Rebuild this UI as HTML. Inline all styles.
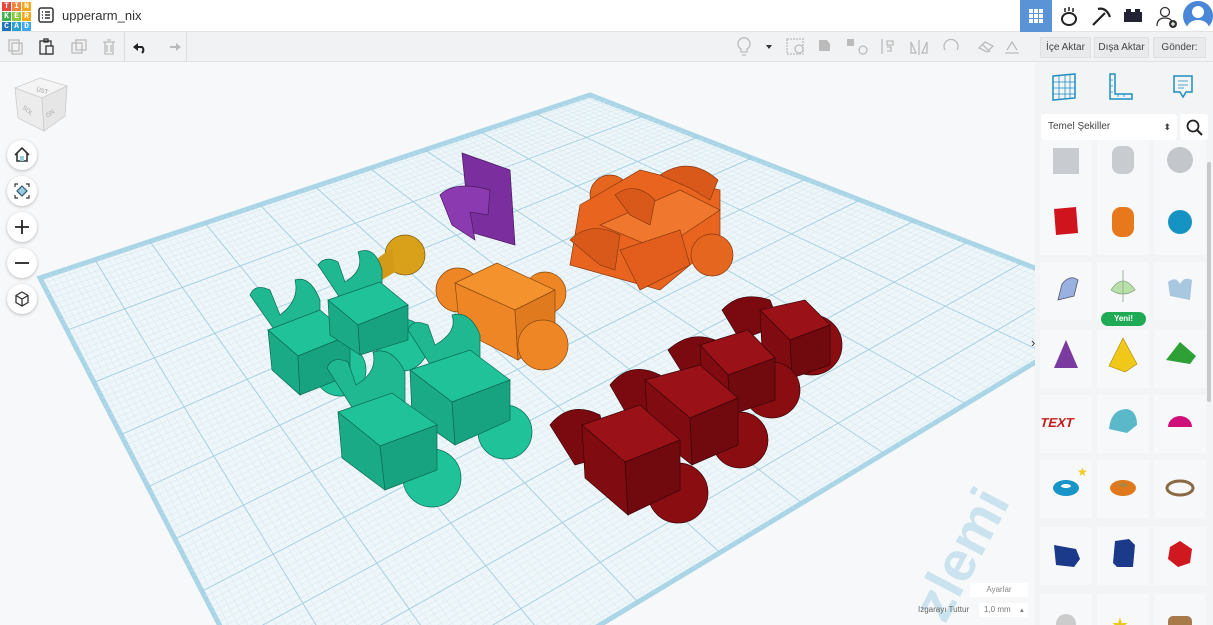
<!DOCTYPE html>
<html><head><meta charset="utf-8"><style>
*{margin:0;padding:0;box-sizing:border-box}
html,body{width:1213px;height:625px;overflow:hidden}
body{font-family:"Liberation Sans",sans-serif;background:#f7f8f9;position:relative}
#top{position:absolute;left:0;top:0;width:1213px;height:32px;background:#fff;border-bottom:1px solid #e3e3e3}
#tb{position:absolute;left:0;top:32px;width:1213px;height:30px;background:#f1f2f4;border-bottom:1px solid #e2e2e2}
.logo{position:absolute;left:2px;top:2px;width:28px;height:28px;display:grid;grid-template-columns:repeat(3,9px);gap:1px}
.logo span{font:bold 8px "Liberation Mono",monospace;color:#fff;text-align:center;line-height:9px}
.title{position:absolute;left:62px;top:8px;font-size:13px;color:#333}
.btn{position:absolute;top:37px;height:21px;background:#e9eaec;border:1px solid #e0e0e0;font-size:10px;color:#444;text-align:center;line-height:19px}
#panel{position:absolute;left:1035px;top:62px;width:178px;height:563px;background:#f3f4f6;overflow:hidden}
.tile{position:absolute;width:52px;height:58px;background:#f7f8fa}
.nav{position:absolute;left:7px;width:30px;height:30px;border-radius:50%;background:#fff;box-shadow:0 1px 3px rgba(0,0,0,.25)}
</style></head><body>
<svg id="scene" width="1035" height="625" style="position:absolute;left:0;top:0">
<g id="grid"></g>
<text x="0" y="0" transform="translate(945,625) rotate(-62)" font-size="56" font-weight="bold" fill="#a8d3e6" opacity=".55" font-family="Liberation Sans">zlemi</text>
<polygon points="462,153 510,170 515,245 470,232" fill="#7b2e9e" stroke="#4a1a60" stroke-width=".7"/>
<path d="M440,195 Q455,180 490,190 L488,215 L470,212 L475,240 L452,225 Z" fill="#8b3ab0" stroke="#4a1a60" stroke-width=".7"/>
<circle cx="405" cy="255" r="20" fill="#d9a01a" stroke="#7a5a10" stroke-width=".7"/>
<polygon points="378,258 392,248 395,272 382,280" fill="#d29a18"/>
<circle cx="610" cy="195" r="20" fill="#e4661f" stroke="#8a3a10" stroke-width=".7"/>
<polygon points="580,205 640,170 720,190 720,240 660,290 570,265" fill="#e8641f" stroke="#8a3a10" stroke-width=".7"/>
<polygon points="600,225 680,190 720,210 660,250 " fill="#f0782e" stroke="#8a3a10" stroke-width=".7"/>
<path d="M570,240 Q590,220 620,235 L615,270 L600,265 Z" fill="#d8591a" stroke="#8a3a10" stroke-width=".7"/>
<path d="M660,175 Q690,155 718,180 L710,200 L690,188 Z" fill="#d8591a" stroke="#8a3a10" stroke-width=".7"/>
<path d="M615,195 Q635,180 655,200 L650,225 L630,215 Z" fill="#d8591a" stroke="#8a3a10" stroke-width=".7"/>
<polygon points="620,250 680,230 690,265 640,290" fill="#e35e1c" stroke="#8a3a10" stroke-width=".7"/>
<circle cx="712" cy="255" r="21" fill="#e4661f" stroke="#8a3a10" stroke-width=".7"/>
<circle cx="458" cy="290" r="22" fill="#ee8626" stroke="#8a4a10" stroke-width=".7"/>
<circle cx="545" cy="293" r="21" fill="#ee8626" stroke="#8a4a10" stroke-width=".7"/>
<polygon points="455,283 497,263 555,290 515,310" fill="#f4922e" stroke="#8a4a10" stroke-width=".7"/>
<polygon points="455,283 515,310 518,360 460,330" fill="#ee8626" stroke="#8a4a10" stroke-width=".7"/>
<polygon points="515,310 555,290 555,335 518,360" fill="#e07a1e" stroke="#8a4a10" stroke-width=".7"/>
<circle cx="543" cy="345" r="25" fill="#ee8626" stroke="#8a4a10" stroke-width=".7"/>
<g fill="#20c29a" stroke="#0b6a52" stroke-width=".7">
<circle cx="340" cy="370" r="26"/>
<path d="M250,295 Q255,283 270,290 L280,315 Q300,300 295,280 Q310,275 320,300 L320,330 L285,345 Z" fill="#1fb891"/>
<polygon points="268,330 320,310 350,335 298,356"/><polygon points="268,330 298,356 300,395 272,370" fill="#1aaa86"/><polygon points="298,356 350,335 350,375 300,395" fill="#18a380"/>
<circle cx="402" cy="345" r="26"/>
<path d="M318,265 Q325,255 338,262 L345,282 Q365,270 358,252 Q375,245 382,270 L382,300 L348,310 Z" fill="#1fb891"/>
<polygon points="328,300 380,282 408,305 358,325"/><polygon points="328,300 358,325 360,355 330,335" fill="#1aaa86"/><polygon points="358,325 408,305 408,340 360,355" fill="#18a380"/>
<circle cx="505" cy="432" r="27"/>
<path d="M408,330 Q412,318 428,325 L435,345 Q458,332 452,315 Q470,310 480,335 L480,370 L440,380 Z" fill="#1fb891"/>
<polygon points="410,370 470,350 510,380 452,402"/><polygon points="410,370 452,402 455,445 412,415" fill="#1aaa86"/><polygon points="452,402 510,380 510,420 455,445" fill="#18a380"/>
<circle cx="432" cy="478" r="29"/>
<path d="M327,368 Q332,355 348,362 L356,385 Q378,372 373,352 Q392,346 405,372 L405,410 L360,420 Z" fill="#1fb891"/>
<polygon points="338,412 392,393 437,425 380,446"/><polygon points="338,412 380,446 385,490 342,458" fill="#1aaa86"/><polygon points="380,446 437,425 437,470 385,490" fill="#18a380"/>
</g>
<g fill="#8a0d12" stroke="#3a0508" stroke-width=".7">
<circle cx="812" cy="345" r="30"/>
<path d="M722,310 Q740,290 770,300 L780,325 L740,340 Z" fill="#7a0a10"/>
<polygon points="760,310 805,300 830,325 790,340" fill="#9a1218"/><polygon points="790,340 830,325 830,365 792,378" fill="#700a0e"/><polygon points="760,310 790,340 792,378 762,350" fill="#800b10"/>
<circle cx="772" cy="390" r="28"/>
<path d="M668,350 Q690,330 715,340 L725,370 L690,385 Z" fill="#7a0a10"/>
<polygon points="700,345 748,330 775,358 728,375" fill="#9a1218"/><polygon points="728,375 775,358 775,400 730,415" fill="#700a0e"/><polygon points="700,345 728,375 730,415 702,390" fill="#800b10"/>
<circle cx="740" cy="440" r="28"/>
<path d="M610,385 Q630,360 660,375 L670,405 L630,420 Z" fill="#7a0a10"/>
<polygon points="645,380 700,365 738,398 690,418" fill="#9a1218"/><polygon points="690,418 738,398 738,445 692,465" fill="#700a0e"/><polygon points="645,380 690,418 692,465 648,430" fill="#800b10"/>
<circle cx="678" cy="493" r="30"/>
<path d="M550,425 Q570,400 600,415 L610,455 L575,465 Z" fill="#7a0a10"/>
<polygon points="582,425 640,405 680,440 625,462" fill="#9a1218"/><polygon points="625,462 680,440 680,490 628,515" fill="#700a0e"/><polygon points="582,425 625,462 628,515 585,478" fill="#800b10"/>
</g>
</svg>
<script>
(function(){
var T=[590,95],L=[40,278],R=[1130,305],B=[310,800];
function p(u,v){return [T[0]*(1-u)*(1-v)+R[0]*u*(1-v)+L[0]*(1-u)*v+B[0]*u*v, T[1]*(1-u)*(1-v)+R[1]*u*(1-v)+L[1]*(1-u)*v+B[1]*u*v];}
var s='<polygon points="'+T+' '+R+' '+B+' '+L+'" fill="#eef6f9" stroke="#a9d5e6" stroke-width="5"/>';
var N=100;
for(var i=1;i<N;i++){var t=i/N,c=(i%10==0)?'#a6d0e2':'#d2e7ef',w=(i%10==0)?1:.5;
var a=p(t,0),b=p(t,1);s+='<line x1="'+a[0]+'" y1="'+a[1]+'" x2="'+b[0]+'" y2="'+b[1]+'" stroke="'+c+'" stroke-width="'+w+'"/>';
a=p(0,t);b=p(1,t);s+='<line x1="'+a[0]+'" y1="'+a[1]+'" x2="'+b[0]+'" y2="'+b[1]+'" stroke="'+c+'" stroke-width="'+w+'"/>';}
document.getElementById('grid').innerHTML=s;})();
</script>
<div id="top">
<div class="logo"><span style="background:#e8453c">T</span><span style="background:#f0843a">I</span><span style="background:#f4a81d">N</span><span style="background:#3fb34f">K</span><span style="background:#8cc63e">E</span><span style="background:#f4a81d">R</span><span style="background:#1c75bc">C</span><span style="background:#2a9fd6">A</span><span style="background:#3fa9f5">D</span></div>
<svg style="position:absolute;left:38px;top:7px" width="16" height="16"><rect x="1" y="1" width="14" height="14" rx="2" fill="none" stroke="#333" stroke-width="1.5"/><path d="M4 5h1M7 5h5M4 8h1M7 8h5M4 11h1M7 11h5" stroke="#333" stroke-width="1.5"/></svg>
<div class="title">upperarm_nix</div>
<div style="position:absolute;left:1020px;top:0;width:32px;height:32px;background:#5a94d6"><svg width="32" height="32"><g fill="#fff"><rect x="9" y="9" width="4" height="4"/><rect x="14" y="9" width="4" height="4"/><rect x="19" y="9" width="4" height="4"/><rect x="9" y="14" width="4" height="4"/><rect x="14" y="14" width="4" height="4"/><rect x="19" y="14" width="4" height="4"/><rect x="9" y="19" width="4" height="4"/><rect x="14" y="19" width="4" height="4"/><rect x="19" y="19" width="4" height="4"/></g></svg></div>
<svg style="position:absolute;left:1058px;top:5px" width="22" height="22"><ellipse cx="11" cy="14" rx="7" ry="6" fill="none" stroke="#222" stroke-width="2"/><path d="M7 3v4M11 2v4M15 3v4" stroke="#222" stroke-width="1.5"/></svg>
<svg style="position:absolute;left:1090px;top:5px" width="22" height="22"><path d="M3 20L15 8M8 4Q16 2 20 12" stroke="#222" stroke-width="2.2" fill="none"/></svg>
<svg style="position:absolute;left:1123px;top:8px" width="20" height="16"><rect x="1" y="4" width="18" height="10" fill="#223"/><rect x="3" y="1" width="5" height="4" fill="#223"/><rect x="12" y="1" width="5" height="4" fill="#223"/></svg>
<svg style="position:absolute;left:1155px;top:5px" width="24" height="24"><circle cx="10" cy="7" r="4.5" fill="none" stroke="#333" stroke-width="1.3"/><path d="M2 21Q2 13 10 13Q16 13 17 17" fill="none" stroke="#333" stroke-width="1.3"/><circle cx="18" cy="19" r="4" fill="#333"/><path d="M16 19h4M18 17v4" stroke="#fff" stroke-width="1.2"/></svg>
<div style="position:absolute;left:1183px;top:1px;width:30px;height:30px;border-radius:50%;background:#4a86d8;overflow:hidden"><div style="position:absolute;left:9px;top:5px;width:12px;height:12px;border-radius:50%;background:#fff"></div><div style="position:absolute;left:4px;top:19px;width:22px;height:16px;border-radius:50%;background:#fff"></div></div>
</div>
<div id="tb">
<svg style="position:absolute;left:6px;top:5px" width="180" height="20"><g fill="none" stroke="#bbb" stroke-width="1.3"><rect x="3" y="3" width="10" height="11"/><rect x="6" y="6" width="10" height="11"/></g><g fill="none" stroke="#333" stroke-width="1.3"><rect x="34" y="4" width="11" height="13"/><rect x="38" y="2" width="4" height="3"/><rect x="40" y="9" width="7" height="8" fill="#f1f2f4"/></g><g fill="none" stroke="#bbb" stroke-width="1.3"><rect x="66" y="6" width="10" height="10"/><rect x="70" y="3" width="10" height="10"/><path d="M97 5h12M99 5v12h8V5M101 8v7M105 8v7M101 3h4"/></g><path d="M128 10h8a4 4 0 0 1 0 6" fill="none" stroke="#222" stroke-width="2"/><path d="M127 10l5-4v8z" fill="#222"/><path d="M172 10h-8" stroke="#bbb" stroke-width="2"/><path d="M175 10l-5-4v8z" fill="#bbb"/></svg>
<div style="position:absolute;left:124px;top:0;width:1px;height:30px;background:#ddd"></div>
<div style="position:absolute;left:186px;top:0;width:1px;height:30px;background:#ddd"></div>
<svg style="position:absolute;left:735px;top:4px" width="300" height="22"><g fill="none" stroke="#bbb" stroke-width="1.3"><path d="M6 16v-3a6 6 0 1 1 6 0v3zM7 19h4"/><rect x="52" y="3" width="16" height="15" stroke-dasharray="2 1"/><circle cx="64" cy="13" r="4"/><circle cx="128" cy="14" r="4"/><path d="M147 3v15M152 5h6v4h-6zM152 11h4v4h-4M184 4v15M181 17l-5-11v11zM187 17l5-11v11zM210 14a7 7 0 1 1 12 0M247 8l8 8M244 12l6-6 8 4-6 6zM272 14l5-8 5 8M270 17h14"/></g><path d="M31 9h6l-3 4z" fill="#333"/><path d="M84 4h8l3 4v7h-11z" fill="#bbb"/><rect x="112" y="3" width="7" height="7" fill="#bbb"/></svg>
</div>
<div class="btn" style="left:1040px;width:51px">İçe Aktar</div>
<div class="btn" style="left:1094px;width:55px">Dışa Aktar</div>
<div class="btn" style="left:1153px;width:53px">Gönder:</div>
<svg style="position:absolute;left:12px;top:76px" width="60" height="60"><polygon points="3,12 28,2 55,10 30,22" fill="#f4f4f4" stroke="#ccc" stroke-width=".8"/><polygon points="3,12 30,22 32,55 6,42" fill="#ececec" stroke="#ccc" stroke-width=".8"/><polygon points="30,22 55,10 53,40 32,55" fill="#e6e6e6" stroke="#ccc" stroke-width=".8"/><text x="24" y="15" font-size="6" fill="#999" transform="rotate(15 24 15)">ÜST</text><text x="10" y="32" font-size="6" fill="#aaa" transform="rotate(40 10 32)">SOL</text><text x="36" y="42" font-size="6" fill="#aaa" transform="rotate(-40 36 42)">ÖN</text></svg>
<div class="nav" style="top:140px"><svg width="30" height="30"><path d="M8 15l7-7 7 7M10 13v8h10v-8" fill="none" stroke="#333" stroke-width="1.6"/><rect x="13" y="16" width="4" height="5" fill="#9cd"/></svg></div>
<div class="nav" style="top:176px"><svg width="30" height="30"><path d="M15 10l5 5-5 5-5-5z" fill="#9cd" stroke="#357" stroke-width="1.2"/><path d="M8 11V8h3M19 8h3v3M22 19v3h-3M11 22H8v-3" fill="none" stroke="#333" stroke-width="1.2"/></svg></div>
<div class="nav" style="top:212px"><svg width="30" height="30"><path d="M15 8v14M8 15h14" stroke="#222" stroke-width="1.8"/></svg></div>
<div class="nav" style="top:248px"><svg width="30" height="30"><path d="M8 15h14" stroke="#222" stroke-width="1.8"/></svg></div>
<div class="nav" style="top:284px"><svg width="30" height="30"><path d="M15 8l6 3.5v7L15 22l-6-3.5v-7zM9 11.5l6 3.5 6-3.5M15 15v7" fill="none" stroke="#333" stroke-width="1.3"/></svg></div>
<div style="position:absolute;left:1031px;top:335px;font-size:13px;color:#333">›</div>
<div style="position:absolute;left:970px;top:583px;width:58px;height:14px;background:#fff;font-size:8px;color:#888;text-align:center;line-height:14px">Ayarlar</div>
<div style="position:absolute;left:918px;top:605px;font-size:8px;color:#666">Izgarayı Tuttur</div>
<div style="position:absolute;left:979px;top:603px;width:49px;height:14px;background:#fff;font-size:8px;color:#777;line-height:14px;padding-left:5px">1,0 mm <span style="margin-left:6px;font-size:6px">▲</span></div>
<div id="panel">
<svg style="position:absolute;left:15px;top:10px" width="150" height="32"><g fill="none" stroke="#1e8fc0" stroke-width="1.5"><path d="M3 4l22-2v24l-22 2z"/><path d="M3 10h22M3 16h22M3 22h22M9 3v24M15 3v24M20 2v24" stroke-width=".8"/><path d="M60 2h5v20h17v5H60z"/><path d="M60 8h3M60 14h3M60 20h3M68 22v3M74 22v3" stroke-width=".8"/><path d="M124 4h18v16h-6l-3 5-3-5h-6z"/><path d="M128 9h10M128 13h10M128 16h6" stroke-width=".8"/></g></svg>
<div style="position:absolute;left:6px;top:52px;width:136px;height:26px;background:#fff;border-radius:3px;font-size:10px;color:#444;line-height:26px;padding-left:7px">Temel Şekiller<span style="position:absolute;right:6px;font-size:9px">⬍</span></div>
<div style="position:absolute;left:145px;top:52px;width:28px;height:26px;background:#fff;border-radius:3px"><svg width="28" height="26"><circle cx="13" cy="12" r="5.5" fill="none" stroke="#222" stroke-width="1.8"/><path d="M17 16l5 5" stroke="#222" stroke-width="2"/></svg></div>
<div style="position:absolute;left:172px;top:100px;width:4px;height:240px;background:#c8c8c8;border-radius:2px"></div>
<div id="tiles"></div>
</div>
<script>
(function(){var h='',rows=[78,135,200,268,333,398,465,532],cols=[5,62,119];
var shapes=[
['<rect x="13" y="8" width="26" height="26" fill="#c8cbd0"/>','<rect x="15" y="6" width="22" height="28" rx="8" fill="#c8cbd0"/>','<circle cx="26" cy="20" r="13" fill="#c3c6cb"/>'],
['<polygon points="14,12 36,10 38,36 16,38" fill="#d0141e"/>','<rect x="15" y="10" width="22" height="30" rx="9" fill="#e8781c"/>','<circle cx="26" cy="25" r="12" fill="#1594c4"/>'],
['<path d="M18 38 L22 22 Q30 12 38 18 L34 34 Z" fill="#9ab0e0" stroke="#556" stroke-width=".8"/>','<path d="M26 8 L26 40 M14 28 Q26 10 38 28 Q26 36 14 28" fill="#b8e0a8" stroke="#8a8" stroke-width=".8"/>','<path d="M14 20 Q22 14 26 22 Q30 14 38 18 L36 38 L16 34Z" fill="#a8c8e0"/>'],
['<polygon points="26,10 38,38 14,38" fill="#7a3aa0"/>','<polygon points="26,8 40,34 28,42 12,36" fill="#f0c81a" stroke="#a80" stroke-width=".6"/>','<polygon points="26,12 42,26 36,34 12,30" fill="#2ea036"/>'],
['<text x="8" y="32" font-size="13" font-weight="bold" fill="#c41a1a" font-family="Liberation Sans" transform="skewX(-15)">TEXT</text>','<path d="M12 34 Q14 14 30 14 Q40 16 40 30 L30 38 Z" fill="#5ab8c8"/>','<path d="M14 32 A12 11 0 0 1 38 32 Z" fill="#d0107a"/>'],
['<ellipse cx="26" cy="28" rx="13" ry="8" fill="#1794c8"/><ellipse cx="26" cy="26" rx="5" ry="2" fill="#fff"/><text x="37" y="16" font-size="12" fill="#f4c820">★</text>','<ellipse cx="26" cy="28" rx="13" ry="8" fill="#e0781c"/><ellipse cx="26" cy="25" rx="5" ry="2" fill="#a84"/>','<ellipse cx="26" cy="28" rx="13" ry="7" fill="none" stroke="#8a6a44" stroke-width="3"/>'],
['<polygon points="14,18 36,22 40,32 34,40 16,38" fill="#1c3a8a"/>','<polygon points="18,14 32,12 38,18 36,40 20,40 16,36" fill="#1c3a8a"/>','<polygon points="26,14 38,22 36,36 24,40 14,32 16,20" fill="#d01820"/>'],
['<circle cx="26" cy="30" r="10" fill="#ccc"/>','<text x="14" y="38" font-size="20" fill="#e8c81a">★</text>','<rect x="14" y="22" width="24" height="16" rx="5" fill="#a87a4a"/>']];
rows.forEach(function(y,r){cols.forEach(function(x,c){h+='<div class="tile" style="left:'+x+'px;top:'+y+'px"><svg width="52" height="58">'+shapes[r][c]+'</svg></div>';});});
h+='<div style="position:absolute;left:66px;top:250px;width:45px;height:14px;border-radius:7px;background:#1faa55;color:#fff;font-size:8px;font-weight:bold;text-align:center;line-height:14px">Yeni!</div>';
document.getElementById('tiles').innerHTML=h;})();
</script>
</body></html>
